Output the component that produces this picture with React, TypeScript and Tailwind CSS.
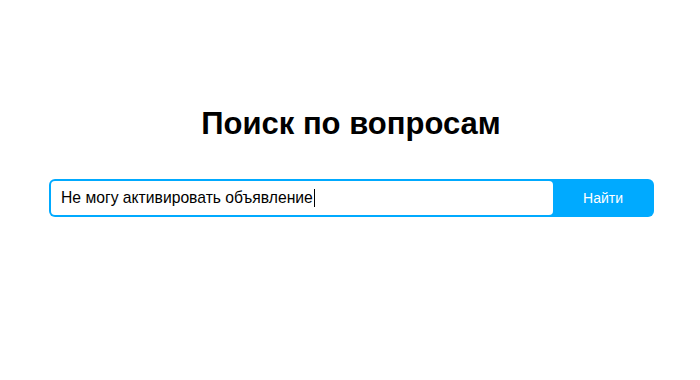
import React from "react";

export default function App() {
  return (
    <div className="w-[700px] h-[380px] bg-white" style={{ fontFamily: '"Liberation Sans", Arial, sans-serif' }}>
      <div className="pt-[105px]">
        <h1 className="text-center text-[31px] leading-[37px] font-bold text-black pl-[2px]">Поиск по вопросам</h1>
        <div className="mt-[37px] ml-[49px] w-[605px] h-[38px] flex rounded-[6px] bg-[#00aaff] p-[2px]">
          <div className="flex-1 bg-white rounded-[4px] flex items-center pl-[10px] text-[15.7px] text-black">
            <span>Не могу активировать объявление</span>
            <span className="inline-block w-px h-[18px] bg-black ml-px"></span>
          </div>
          <button className="w-[99px] text-white text-[14px] flex items-center justify-center pl-[1px]">Найти</button>
        </div>
      </div>
    </div>
  );
}
